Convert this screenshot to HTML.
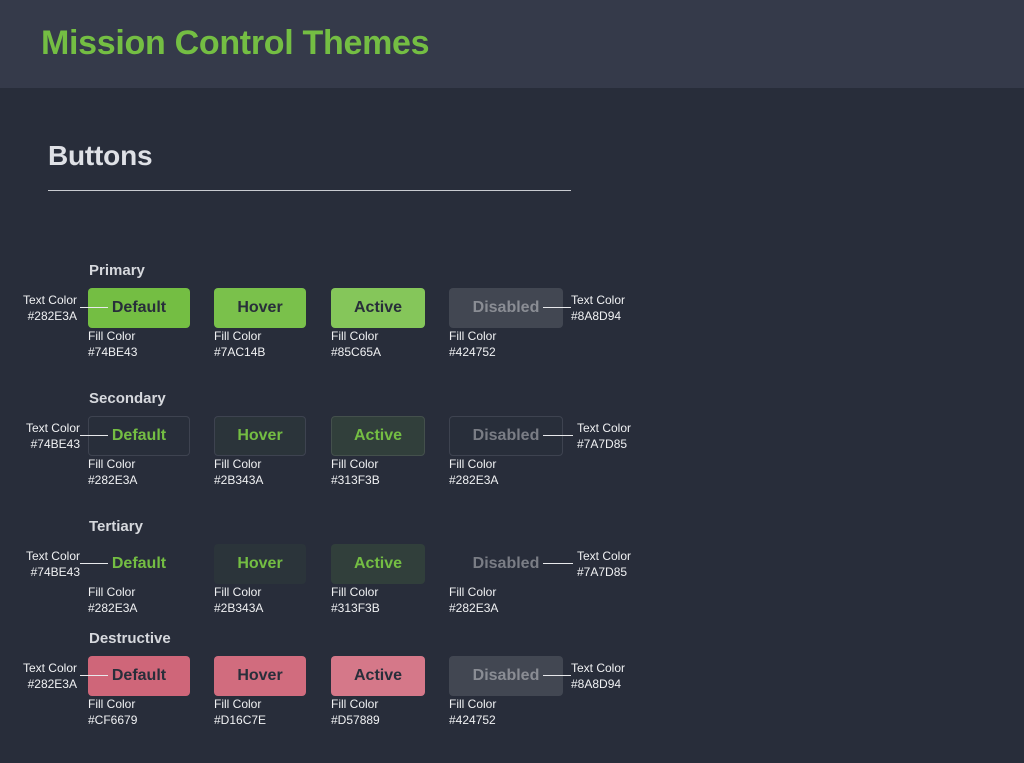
<!DOCTYPE html>
<html><head><meta charset="utf-8"><style>
*{margin:0;padding:0;box-sizing:border-box}
body{width:1024px;height:763px;background:#282D3A;font-family:"Liberation Sans",sans-serif;position:relative;overflow:hidden}
.hdr{position:absolute;left:0;top:0;width:1024px;height:88px;background:#353A4A}
.title{position:absolute;left:41px;top:24px;font-size:34px;font-weight:bold;color:#74BE43;letter-spacing:-0.3px}
.h2{position:absolute;left:48px;top:140px;font-size:28px;color:#DFE1E6;font-weight:bold;letter-spacing:-0.2px}
.rule{position:absolute;left:48px;top:190px;width:523px;height:1px;background:#C9CBD0}
.sec{position:absolute;left:89px;font-size:15px;font-weight:bold;color:#D6D8DD}
.b{position:absolute;height:40px;border-radius:4px;font-size:16px;font-weight:bold;display:flex;align-items:center;justify-content:center}
.lab{position:absolute;font-size:12px;line-height:16px;color:#F0F1F3}
.r{text-align:right}
.ln{position:absolute;height:1px;background:#E8E9EC}
</style></head><body>
<div class="hdr"></div>
<div class="title">Mission Control Themes</div>
<div class="h2">Buttons</div>
<div class="rule"></div>

<!-- Primary -->
<div class="sec" style="top:262px">Primary</div>
<div class="b" style="left:88px;top:288px;width:102px;background:#74BE43;color:#282E3A">Default</div>
<div class="b" style="left:214px;top:288px;width:92px;background:#7AC14B;color:#282E3A">Hover</div>
<div class="b" style="left:331px;top:288px;width:94px;background:#85C65A;color:#282E3A">Active</div>
<div class="b" style="left:449px;top:288px;width:114px;background:#424752;color:#8A8D94">Disabled</div>
<div class="lab r" style="left:0;width:77px;top:292px">Text Color<br>#282E3A</div>
<div class="ln" style="left:80px;width:28px;top:307px"></div>
<div class="ln" style="left:543px;width:28px;top:307px"></div>
<div class="lab" style="left:571px;top:292px">Text Color<br>#8A8D94</div>
<div class="lab" style="left:88px;top:328px">Fill Color<br>#74BE43</div>
<div class="lab" style="left:214px;top:328px">Fill Color<br>#7AC14B</div>
<div class="lab" style="left:331px;top:328px">Fill Color<br>#85C65A</div>
<div class="lab" style="left:449px;top:328px">Fill Color<br>#424752</div>

<!-- Secondary -->
<div class="sec" style="top:390px">Secondary</div>
<div class="b" style="left:88px;top:416px;width:102px;background:#282E3A;border:1px solid #3E4350;color:#74BE43">Default</div>
<div class="b" style="left:214px;top:416px;width:92px;background:#2B343A;border:1px solid #3E4350;color:#74BE43">Hover</div>
<div class="b" style="left:331px;top:416px;width:94px;background:#313F3B;border:1px solid #44504C;color:#74BE43">Active</div>
<div class="b" style="left:449px;top:416px;width:114px;background:#282E3A;border:1px solid #3E4350;color:#7A7D85">Disabled</div>
<div class="lab r" style="left:0;width:80px;top:420px">Text Color<br>#74BE43</div>
<div class="ln" style="left:80px;width:28px;top:435px"></div>
<div class="ln" style="left:543px;width:30px;top:435px"></div>
<div class="lab" style="left:577px;top:420px">Text Color<br>#7A7D85</div>
<div class="lab" style="left:88px;top:456px">Fill Color<br>#282E3A</div>
<div class="lab" style="left:214px;top:456px">Fill Color<br>#2B343A</div>
<div class="lab" style="left:331px;top:456px">Fill Color<br>#313F3B</div>
<div class="lab" style="left:449px;top:456px">Fill Color<br>#282E3A</div>

<!-- Tertiary -->
<div class="sec" style="top:518px">Tertiary</div>
<div class="b" style="left:88px;top:544px;width:102px;color:#74BE43">Default</div>
<div class="b" style="left:214px;top:544px;width:92px;background:#2B343A;color:#74BE43">Hover</div>
<div class="b" style="left:331px;top:544px;width:94px;background:#313F3B;color:#74BE43">Active</div>
<div class="b" style="left:449px;top:544px;width:114px;color:#7A7D85">Disabled</div>
<div class="lab r" style="left:0;width:80px;top:548px">Text Color<br>#74BE43</div>
<div class="ln" style="left:80px;width:28px;top:563px"></div>
<div class="ln" style="left:543px;width:30px;top:563px"></div>
<div class="lab" style="left:577px;top:548px">Text Color<br>#7A7D85</div>
<div class="lab" style="left:88px;top:584px">Fill Color<br>#282E3A</div>
<div class="lab" style="left:214px;top:584px">Fill Color<br>#2B343A</div>
<div class="lab" style="left:331px;top:584px">Fill Color<br>#313F3B</div>
<div class="lab" style="left:449px;top:584px">Fill Color<br>#282E3A</div>

<!-- Destructive -->
<div class="sec" style="top:630px">Destructive</div>
<div class="b" style="left:88px;top:656px;width:102px;background:#CF6679;color:#282E3A">Default</div>
<div class="b" style="left:214px;top:656px;width:92px;background:#D16C7E;color:#282E3A">Hover</div>
<div class="b" style="left:331px;top:656px;width:94px;background:#D57889;color:#282E3A">Active</div>
<div class="b" style="left:449px;top:656px;width:114px;background:#424752;color:#8A8D94">Disabled</div>
<div class="lab r" style="left:0;width:77px;top:660px">Text Color<br>#282E3A</div>
<div class="ln" style="left:80px;width:28px;top:675px"></div>
<div class="ln" style="left:543px;width:28px;top:675px"></div>
<div class="lab" style="left:571px;top:660px">Text Color<br>#8A8D94</div>
<div class="lab" style="left:88px;top:696px">Fill Color<br>#CF6679</div>
<div class="lab" style="left:214px;top:696px">Fill Color<br>#D16C7E</div>
<div class="lab" style="left:331px;top:696px">Fill Color<br>#D57889</div>
<div class="lab" style="left:449px;top:696px">Fill Color<br>#424752</div>
</body></html>
